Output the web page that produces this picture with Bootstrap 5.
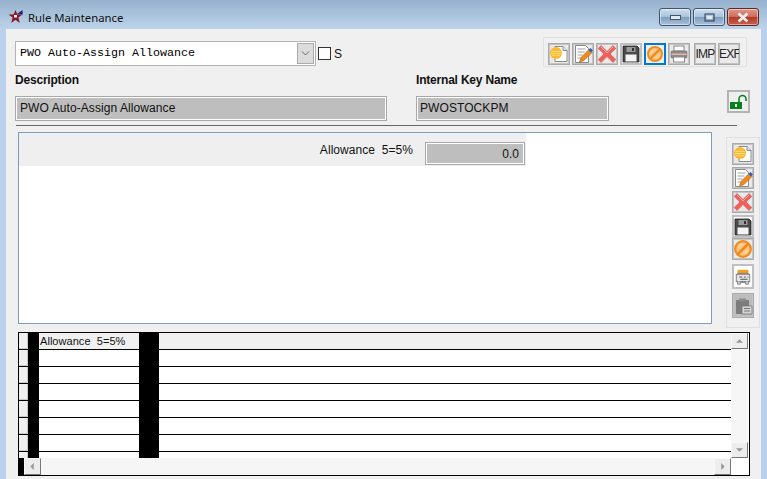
<!DOCTYPE html>
<html lang="en">
<head>
<meta charset="utf-8">
<title>Rule Maintenance</title>
<link href="https://cdn.jsdelivr.net/npm/bootstrap@5.3.0/dist/css/bootstrap.min.css" rel="stylesheet">
<style>
html,body{height:479px;overflow:hidden}
body{background:#b9d1ea;font-family:"Liberation Sans",Arial,sans-serif;font-size:12px;color:#111;line-height:1}
.win-title{height:29px;background:linear-gradient(#97b2ce,#bcd3ea);padding-left:8px;font-family:"Noto Sans",sans-serif;font-size:11.3px}
.title-text{margin-top:11px;margin-left:5px;line-height:14px}
.title-star{margin-top:9px;flex:none}
.win-ctrl{width:32px;height:18px;border:1px solid #44546a;border-radius:3px;background:linear-gradient(#cfdff0 0,#a9c2dc 48%,#7f9dbd 52%,#a8c2dc 100%);box-shadow:inset 0 0 0 1px rgba(255,255,255,.45)}
.win-max,.win-close{margin-left:2px}
.win-close{background:linear-gradient(#e09a8c 0,#cf6a58 48%,#b03a28 52%,#c9604c 100%);border-color:#5e2a26}
.win-btns{margin-top:8px;margin-right:8px}
.win-body{margin-left:6px;margin-right:6px;height:450px;background:#f0f0f0}
.top-row{padding-top:8px;padding-left:9px;height:38px}
.combo{width:301px;height:25px;margin-top:4px;background:#fff;border:1px solid #b4b4b4;font-family:"Liberation Mono",monospace;font-size:11.67px;padding-left:4px;color:#000}
.combo-arrow{width:17px;height:21px;margin:1px;background:#dcdcdc;border:1px solid #ababab}
.chk{width:13px;height:13px;border:1px solid #333;background:#fff;margin:10px 3px 0 2px}
.chk-label{margin-top:11px;font-size:12px}
.tools-top{width:204px;height:30px;border:1px solid #dfdfdf;margin-left:auto;margin-right:14px;padding:5px 0 0 4px}
.tb{width:22px;height:22px;padding:0;border:1px solid #a9a9a9;border-radius:0;background:#e9e9e9;flex:none;color:#222;font-size:12px;letter-spacing:-.8px;line-height:1;overflow:hidden;box-shadow:inset 0 0 0 1px #c4c4c4}
.tb:hover,.tb:focus{background:#e9e9e9;border-color:#a9a9a9;color:#222}
.tb svg{display:block;width:20px;height:20px}
.tb-white{background:#fff;border:2px solid #c0c0c0;box-shadow:none}
.tb-white svg{width:18px;height:18px}
.tb-sel,.tb-sel:hover{border:2px solid #0078d7;background:#eee;box-shadow:none}
.tb-sel svg{width:18px;height:18px}
.gap-tb{margin-left:2px}
.gap-txt{margin-left:4px}
.desc-row{padding-left:9px;margin-top:6px;height:52px}
.field-a{width:401px}.field-b{width:193px}
.field-lbl{font-weight:700;font-size:12px;height:15px;line-height:15px;margin-bottom:8px;letter-spacing:-.2px}
.ro{height:25px;border:1px solid #a8a8a8;box-shadow:inset 0 0 0 1px #fff;background:#bebebe;padding-left:4px;line-height:23px;font-size:12px;letter-spacing:.08px}
.ro-a{width:372px}.ro-b{width:193px;padding-left:3px}
.lock-btn{width:23px;height:23px;padding:0;border:2px solid #b4b4b4;border-radius:0;background:#efefef;margin-left:auto;margin-right:11px;margin-top:17px}
.lock-btn svg{display:block;width:19px;height:19px}
.rule-line{height:1px;background:#666;margin-left:10px;width:721px}
.main-row{margin-top:6px;padding-left:12px;height:196px}
.panel-box{width:694px;height:192px;border:1px solid #7f9db9;background:#fff}
.panel-strip{width:507px;height:33px;background:#efefef;padding-top:9px}
.panel-lbl{width:394px;text-align:right;padding-top:2px;font-size:12px;letter-spacing:.05px}
.panel-inp{width:100px;height:23px;margin-left:12px;border:1px solid #a8a8a8;box-shadow:inset 0 0 0 1px #fff;background:#bebebe;text-align:right;padding-right:5px;line-height:23px;font-size:12px}
.tools-side{width:34px;height:191px;margin-left:14px;margin-top:5px;border:1px solid #dfdfdf;padding:5px 0 0 5px}
.tb-m{margin-bottom:2px}
.tb-tall{height:25px;margin-top:2px}
.tb-dis{background:#bdbdbd}
.tb-fl{margin-bottom:0;height:23px}
.data-grid{margin-left:12px;margin-top:4px;width:732px;height:144px;border:1px solid #000;background:#fff;font-size:11px}
.grid-top{height:125px}
.grid-rows{width:712px;height:125px;overflow:hidden}
.grid-r{height:17px;border-bottom:1px solid #000}
.grid-r.r-head{background:#f0f0f0}
.grid-r.r-last{height:7px;border-bottom:0}
.c-sel{width:9px;background:#f0f0f0;box-shadow:inset -1px -1px 0 #c8c8c8}
.c-blk{background:#000;flex:none}
.c-b1{width:11px}.c-b2{width:20px}
.c-txt{width:100px;padding:3px 0 0 1px;letter-spacing:.05px}
.c-rest{flex:1}
.sb-track{background-color:#f6f6f6}
.sb-v{width:17px;height:125px}
.sb-btn{width:17px;height:16px;background:#ededed;border:1px solid #f8f8f8;border-right-color:#777;border-bottom-color:#777;flex:none}
.sb-btn svg{display:block;width:100%;height:100%}
.grid-bot{height:17px}
.blk-corner{width:5px;background:#000}
.sb-fill{flex:1}
.sb-h-btn{height:17px}
.corner{width:18px;background:#fff}
.defs-holder{position:absolute;width:0;height:0}
</style>
</head>
<body>
<svg class="defs-holder">
<defs>
<symbol id="i-new" viewBox="0 0 20 20"><path d="M6 2.500h8l4 4v11H6z" fill="#fff" stroke="#8a8a8a"/><path d="M14 2.500v4h4" fill="#dfe6ee" stroke="#8a8a8a"/><circle cx="7" cy="9" r="6" fill="#fbb934"/><path d="M2.500 7.500h9M2 9.500h10M3 11.500h8" stroke="#ffdc78"/></symbol>
<symbol id="i-edit" viewBox="0 0 20 20"><path d="M2.500 1.500h10l3 3v14h-13z" fill="#fff" stroke="#8a8a8a"/><path d="M4.500 5h8M4.500 8h7M4.500 11h5M4.500 14h3" stroke="#a0a0a0"/><path d="M6.500 18l1.500-4.500 8-8 3 3-8 8z" fill="#f08a1e" stroke="#b95b08" stroke-width=".6"/><path d="M15.500 6l2-2 2.500 2.500-2 2z" fill="#2c5fbf"/></symbol>
<symbol id="i-del" viewBox="0 0 20 20"><path d="M4 1.500L10 7.500 16 1.500 18.800 4.500 13 10l5.800 5.500L16 18.500 10 12.500 4 18.500 1.200 15.500 7 10 1.200 4.500z" fill="#f0605a" stroke="#d8685f" stroke-width=".8" stroke-linejoin="round"/><path d="M4 3L10 9l6-6" fill="none" stroke="#f9a8a0"/></symbol>
<symbol id="i-save" viewBox="0 0 18 18"><path d="M1 1h14l2 2v14H1z" fill="#4a4a4a" stroke="#222" stroke-width=".8"/><rect x="4.500" y="2" width="9" height="5" fill="#9a9a9a"/><rect x="10" y="3" width="2" height="3" fill="#333"/><rect x="3.500" y="9.500" width="11" height="7" fill="#f4f4f4"/></symbol>
<symbol id="i-no" viewBox="0 0 18 18"><circle cx="9" cy="9" r="7" fill="#fbc682" stroke="#f08a1e" stroke-width="2"/><path d="M4 14L14 4" stroke="#f08a1e" stroke-width="2.400"/><path d="M4.500 8L8 4.500M10 13.500L13.500 10" stroke="#fde0b8"/></symbol>
<symbol id="i-print" viewBox="0 0 20 20"><rect x="5" y="2" width="10" height="5" fill="#fff" stroke="#888"/><rect x="2" y="7" width="16" height="7" rx="1" fill="#8c8c8c" stroke="#707070" stroke-width=".6"/><rect x="2.500" y="9.500" width="15" height="1.500" fill="#f2b0a8"/><rect x="4.500" y="13" width="11" height="5" fill="#fff" stroke="#888"/></symbol>
<symbol id="i-copy" viewBox="0 0 20 20"><rect x="4" y="2" width="12" height="4" fill="#f0a01e"/><path d="M4 6h12v10H4z" fill="#fff" stroke="#777"/><rect x="2.500" y="7" width="15" height="8" fill="#e6e6e6" stroke="#777"/><path d="M6 10h3M11 10h2M15 10h1M7 12.500h8" stroke="#444"/><path d="M4 15v3h3v-3M13 15v3h3v-3" fill="#ddd" stroke="#777"/></symbol>
<symbol id="i-paste" viewBox="0 0 20 20"><rect x="3" y="4" width="13" height="14" rx="1" fill="#7c7c7c"/><rect x="6" y="2.500" width="7" height="3" fill="#8c8c8c"/><path d="M9 10h10v8H9z" fill="#d4d4d4" stroke="#777" stroke-width=".8"/><path d="M11 12.500h6M11 15h6" stroke="#777"/></symbol>
</defs>
</svg>

<div class="win-title d-flex">
  <svg width="15" height="15" viewBox="0 0 15 15" class="title-star"><path d="M7.500 1l1.800 4.600H14.500l-4.200 3 1.500 5.400-4.300-3.200-4.300 3.200 1.500-5.400L.5 5.600h5.200z" fill="#8c1020"/><path d="M9 5L14.500 1 14.800 5.600z" fill="#24257a"/><path d="M6 6h3v2.500H6z" fill="#fff"/></svg>
  <div class="title-text">Rule Maintenance</div>
  <div class="d-flex ms-auto win-btns align-items-start">
    <div class="win-ctrl d-flex align-items-center justify-content-center"><svg width="11" height="5" viewBox="0 0 11 5"><rect x=".5" y=".5" width="10" height="4" fill="#e4e8ee" stroke="#46566a"/></svg></div>
    <div class="win-ctrl win-max d-flex align-items-center justify-content-center"><svg width="11" height="9" viewBox="0 0 11 9"><rect x="1" y="1" width="9" height="7" fill="none" stroke="#2b3a4e"/><rect x="2.500" y="3" width="6" height="3" fill="#e4e8ee"/></svg></div>
    <div class="win-ctrl win-close d-flex align-items-center justify-content-center"><svg width="14" height="11" viewBox="0 0 14 11"><path d="M2.500 1.500l9 8M11.500 1.500l-9 8" fill="none" stroke="#f6f0ee" stroke-width="2.800"/></svg></div>
  </div>
</div>

<div class="win-body">
  <div class="top-row d-flex">
    <div class="combo d-flex align-items-center justify-content-between"><span>PWO Auto-Assign Allowance</span>
      <span class="combo-arrow d-flex align-items-center justify-content-center"><svg width="9" height="5" viewBox="0 0 9 5"><path d="M1 .5l3.500 3.500L8 .5" fill="none" stroke="#666"/></svg></span></div>
    <div class="chk"></div><div class="chk-label">S</div>
    <div class="tools-top d-flex">
      <button class="btn tb" type="button"><svg><use href="#i-new"/></svg></button>
      <button class="btn tb gap-tb" type="button"><svg><use href="#i-edit"/></svg></button>
      <button class="btn tb gap-tb" type="button"><svg><use href="#i-del"/></svg></button>
      <button class="btn tb gap-tb tb-white" type="button"><svg><use href="#i-save"/></svg></button>
      <button class="btn tb gap-tb tb-sel" type="button"><svg><use href="#i-no"/></svg></button>
      <button class="btn tb gap-tb" type="button"><svg><use href="#i-print"/></svg></button>
      <button class="btn tb gap-txt" type="button">IMP</button>
      <button class="btn tb gap-tb" type="button">EXF</button>
    </div>
  </div>

  <div class="desc-row d-flex">
    <div class="field-a"><div class="field-lbl">Description</div><div class="ro ro-a">PWO Auto-Assign Allowance</div></div>
    <div class="field-b"><div class="field-lbl">Internal Key Name</div><div class="ro ro-b">PWOSTOCKPM</div></div>
    <button class="btn lock-btn" type="button"><svg viewBox="0 0 19 19"><rect x="1" y="10" width="12" height="7" fill="#07801e"/><rect x="6" y="12" width="2" height="3" fill="#fff"/><path d="M10 10V7a3.500 3.500 0 0 1 7 0v2" fill="none" stroke="#07801e" stroke-width="1.600"/></svg></button>
  </div>
  <div class="rule-line"></div>

  <div class="main-row d-flex">
    <div class="panel-box">
      <div class="panel-strip d-flex">
        <div class="panel-lbl">Allowance&nbsp; 5=5%</div>
        <div class="panel-inp">0.0</div>
      </div>
    </div>
    <div class="tools-side d-flex flex-column">
      <button class="btn tb tb-m" type="button"><svg><use href="#i-new"/></svg></button>
      <button class="btn tb tb-m" type="button"><svg><use href="#i-edit"/></svg></button>
      <button class="btn tb tb-m" type="button"><svg><use href="#i-del"/></svg></button>
      <button class="btn tb tb-fl tb-white" type="button"><svg><use href="#i-save"/></svg></button>
      <button class="btn tb" type="button"><svg><use href="#i-no"/></svg></button>
      <button class="btn tb tb-tall tb-white mt-1" type="button"><svg><use href="#i-copy"/></svg></button>
      <button class="btn tb tb-tall tb-dis mt-1" type="button"><svg><use href="#i-paste"/></svg></button>
    </div>
  </div>

  <div class="data-grid d-flex flex-column">
    <div class="grid-top d-flex">
      <div class="grid-rows">
        <div class="grid-r r-head d-flex"><div class="c-sel"></div><div class="c-blk c-b1"></div><div class="c-txt">Allowance&nbsp; 5=5%</div><div class="c-blk c-b2"></div><div class="c-rest"></div></div>
        <div class="grid-r d-flex"><div class="c-sel"></div><div class="c-blk c-b1"></div><div class="c-txt"></div><div class="c-blk c-b2"></div><div class="c-rest"></div></div>
        <div class="grid-r d-flex"><div class="c-sel"></div><div class="c-blk c-b1"></div><div class="c-txt"></div><div class="c-blk c-b2"></div><div class="c-rest"></div></div>
        <div class="grid-r d-flex"><div class="c-sel"></div><div class="c-blk c-b1"></div><div class="c-txt"></div><div class="c-blk c-b2"></div><div class="c-rest"></div></div>
        <div class="grid-r d-flex"><div class="c-sel"></div><div class="c-blk c-b1"></div><div class="c-txt"></div><div class="c-blk c-b2"></div><div class="c-rest"></div></div>
        <div class="grid-r d-flex"><div class="c-sel"></div><div class="c-blk c-b1"></div><div class="c-txt"></div><div class="c-blk c-b2"></div><div class="c-rest"></div></div>
        <div class="grid-r d-flex"><div class="c-sel"></div><div class="c-blk c-b1"></div><div class="c-txt"></div><div class="c-blk c-b2"></div><div class="c-rest"></div></div>
        <div class="grid-r r-last d-flex"><div class="c-sel"></div><div class="c-blk c-b1"></div><div class="c-txt"></div><div class="c-blk c-b2"></div><div class="c-rest"></div></div>
      </div>
      <div class="sb-v sb-track d-flex flex-column justify-content-between">
        <div class="sb-btn"><svg viewBox="0 0 17 16"><path d="M4.500 10L8.500 6l4 4z" fill="#999"/></svg></div>
        <div class="sb-btn"><svg viewBox="0 0 17 16"><path d="M4.500 6l4 4 4-4z" fill="#999"/></svg></div>
      </div>
      <div class="flex-grow-1 bg-white"></div>
    </div>
    <div class="grid-bot d-flex">
      <div class="blk-corner"></div>
      <div class="sb-btn sb-h-btn"><svg viewBox="0 0 17 17"><path d="M10 4.500L6 8.500l4 4z" fill="#999"/></svg></div>
      <div class="sb-fill sb-track"></div>
      <div class="sb-btn sb-h-btn"><svg viewBox="0 0 17 17"><path d="M7 4.500l4 4-4 4z" fill="#999"/></svg></div>
      <div class="corner"></div>
    </div>
  </div>
</div>
<script src="https://cdn.jsdelivr.net/npm/bootstrap@5.3.0/dist/js/bootstrap.bundle.min.js"></script>
</body>
</html>
